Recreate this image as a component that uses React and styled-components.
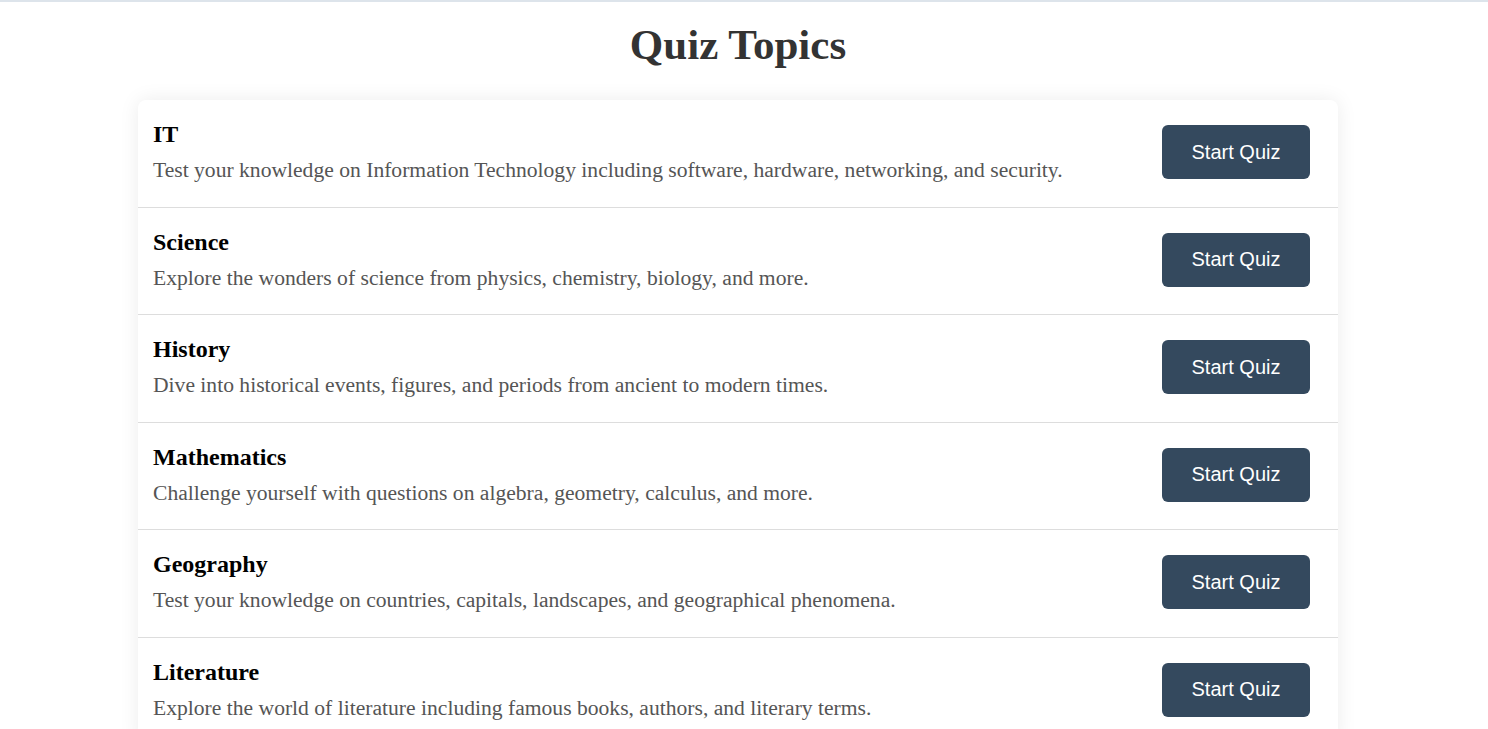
import React from "react";
import styled, { createGlobalStyle } from "styled-components";

const GlobalStyle = createGlobalStyle`
    html, body {
        margin: 0;
        padding: 0;
        background: #ffffff;
    }
    body {
        border-top: 2px solid #dde4eb;
        font-family: "Liberation Serif", "Times New Roman", serif;
    }
`;

const Page = styled.div`
    padding: 18px 12px 40px 0;
`;

const Heading = styled.h1`
    margin: 0 0 31px;
    text-align: center;
    font-size: 43px;
    font-weight: bold;
    color: #333333;
`;

const Card = styled.div`
    width: 1200px;
    margin: 0 auto;
    background: #ffffff;
    border-radius: 8px;
    box-shadow: 0 0 20px rgba(0, 0, 0, 0.08);
`;

const Row = styled.div`
    display: flex;
    align-items: center;
    justify-content: space-between;
    padding: 21px 28px 23.5px 15px;
    border-bottom: 1px solid #dddddd;

    &:last-child {
        border-bottom: none;
    }
`;

const Info = styled.div`
    display: flex;
    flex-direction: column;
`;

const TopicName = styled.h3`
    margin: 0 0 10px;
    font-size: 24px;
    font-weight: bold;
    color: #000000;
`;

const Description = styled.p`
    margin: 0;
    font-size: 21.6px;
    color: #555555;
`;

const StartButton = styled.button`
    flex-shrink: 0;
    width: 148px;
    height: 54px;
    border: none;
    border-radius: 6px;
    background-color: #34495e;
    color: #ffffff;
    font-family: "Liberation Sans", Arial, sans-serif;
    font-size: 20px;
    cursor: pointer;
`;

const topics = [
    { name: "IT", desc: "Test your knowledge on Information Technology including software, hardware, networking, and security." },
    { name: "Science", desc: "Explore the wonders of science from physics, chemistry, biology, and more." },
    { name: "History", desc: "Dive into historical events, figures, and periods from ancient to modern times." },
    { name: "Mathematics", desc: "Challenge yourself with questions on algebra, geometry, calculus, and more." },
    { name: "Geography", desc: "Test your knowledge on countries, capitals, landscapes, and geographical phenomena." },
    { name: "Literature", desc: "Explore the world of literature including famous books, authors, and literary terms." },
];

const App = () => {
    return (
        <>
            <GlobalStyle />
            <Page>
                <Heading>Quiz Topics</Heading>
                <Card>
                    {topics.map((t) => (
                        <Row key={t.name}>
                            <Info>
                                <TopicName>{t.name}</TopicName>
                                <Description>{t.desc}</Description>
                            </Info>
                            <StartButton>Start Quiz</StartButton>
                        </Row>
                    ))}
                </Card>
            </Page>
        </>
    );
};

export default App;
